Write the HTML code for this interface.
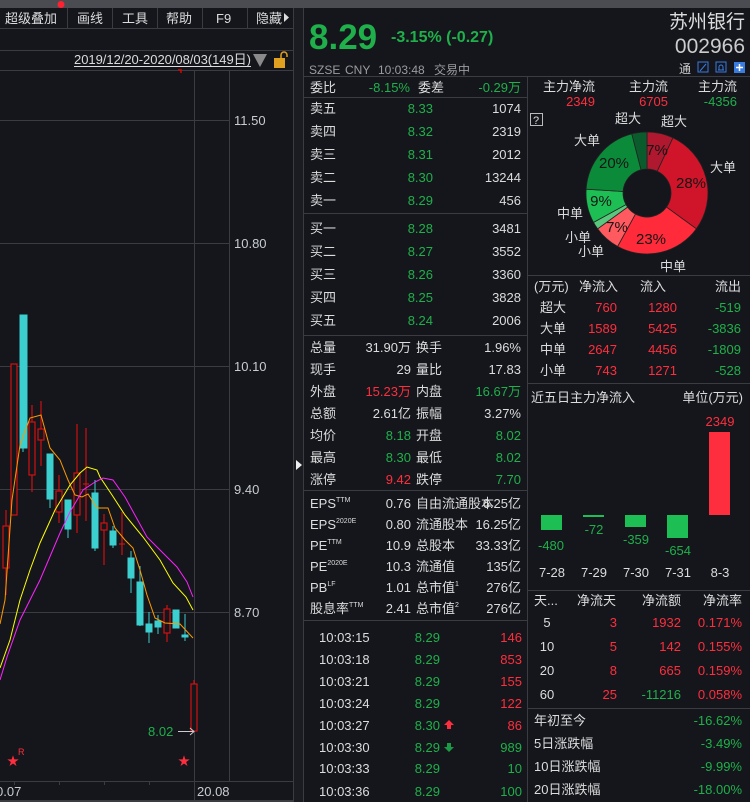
<!DOCTYPE html>
<html><head><meta charset="utf-8"><style>
html,body{margin:0;padding:0;background:#14161b;width:750px;height:802px;overflow:hidden}
svg{display:block}
text{font-family:"Liberation Sans","Noto Sans CJK SC",sans-serif;font-size:13px;fill:#dcdcdc}
.g{fill:#1fb04b}.r{fill:#ff2e3e}.gr{fill:#9a9ca0}.e{text-anchor:end}.m{text-anchor:middle}
.pl{fill:#151515;font-size:15px;text-anchor:middle}
</style></head><body>
<svg width="750" height="802" viewBox="0 0 750 802">
<rect width="750" height="802" fill="#14161b"/>
<rect width="750" height="8" fill="#4a4c52"/>
<g stroke="#3a3c42" stroke-width="1">
<line x1="0" y1="28.5" x2="293" y2="28.5"/><line x1="0" y1="50.5" x2="293" y2="50.5"/><line x1="0" y1="70.5" x2="293" y2="70.5"/>
<line x1="67.5" y1="8" x2="67.5" y2="28"/><line x1="112.5" y1="8" x2="112.5" y2="28"/><line x1="157.5" y1="8" x2="157.5" y2="28"/><line x1="202.5" y1="8" x2="202.5" y2="28"/><line x1="247.5" y1="8" x2="247.5" y2="28"/>
<line x1="293.5" y1="8" x2="293.5" y2="802"/>
<line x1="194.5" y1="70" x2="194.5" y2="802"/><line x1="229.5" y1="70" x2="229.5" y2="781"/>
<line x1="0" y1="120.5" x2="229" y2="120.5"/><line x1="0" y1="243.5" x2="229" y2="243.5"/><line x1="0" y1="366.5" x2="229" y2="366.5"/><line x1="0" y1="489.5" x2="229" y2="489.5"/><line x1="0" y1="612.5" x2="229" y2="612.5"/>
<line x1="0" y1="781.5" x2="293" y2="781.5"/>
<line x1="14.5" y1="781" x2="14.5" y2="785"/><line x1="59.5" y1="781" x2="59.5" y2="785"/><line x1="104.5" y1="781" x2="104.5" y2="785"/><line x1="149.5" y1="781" x2="149.5" y2="785"/>
</g>
<rect x="0" y="800" width="293" height="2" fill="#3a3c42"/>
<text x="5" y="23">超级叠加</text><circle cx="61" cy="4.5" r="3.5" fill="#ff2030"/>
<text x="77" y="23">画线</text><text x="122" y="23">工具</text><text x="166" y="23">帮助</text><text x="216" y="23">F9</text><text x="256" y="23">隐藏</text>
<polygon points="284,13 289,17.5 284,22" fill="#ddd"/>
<text x="74" y="64" style="font-size:13px" textLength="177">2019/12/20-2020/08/03(149日)</text>
<line x1="74" y1="66.5" x2="251" y2="66.5" stroke="#ddd"/>
<polygon points="253,54 267,54 260,67" fill="#8a8a8a"/>
<rect x="274" y="58" width="11" height="10" fill="#e0a020"/><path d="M281 58 v-3 a3 3 0 0 1 6 0 v2" stroke="#e0a020" fill="none" stroke-width="1.5"/>
<path d="M178 70 h3 v3" stroke="#d00" stroke-width="1.5" fill="none"/>
<g><text x="234" y="125" style="fill:#c8ccd2">11.50</text><text x="234" y="248" style="fill:#c8ccd2">10.80</text><text x="234" y="371" style="fill:#c8ccd2">10.10</text><text x="234" y="494" style="fill:#c8ccd2">9.40</text><text x="234" y="617" style="fill:#c8ccd2">8.70</text></g>
<text x="-4" y="796" style="fill:#c8ccd2">0.07</text><text x="197" y="796" style="fill:#c8ccd2">20.08</text>
<g stroke="#d01010" fill="none" stroke-width="1.2">
<line x1="6" y1="510" x2="6" y2="595"/><rect x="3" y="526" width="6" height="42" fill="#14161b"/>
<rect x="11" y="364" width="6" height="151" fill="#14161b"/>
<line x1="32" y1="405" x2="32" y2="492"/><rect x="29" y="422" width="6" height="53" fill="#14161b"/>
<line x1="41" y1="401" x2="41" y2="466"/><rect x="38" y="429" width="6" height="11" fill="#14161b"/>
<line x1="59" y1="475" x2="59" y2="523"/><rect x="56" y="491" width="6" height="21" fill="#14161b"/>
<line x1="77" y1="424" x2="77" y2="533"/><rect x="74" y="473" width="6" height="42" fill="#14161b"/>
<line x1="86" y1="428" x2="86" y2="521"/><line x1="83" y1="484" x2="89" y2="484"/>
<line x1="104" y1="514" x2="104" y2="565"/><rect x="101" y="523" width="6" height="7" fill="#14161b"/>
<line x1="122" y1="512" x2="122" y2="555"/><line x1="119" y1="544" x2="125" y2="544"/>
<line x1="167" y1="605" x2="167" y2="642"/><rect x="164" y="609" width="6" height="24" fill="#14161b"/>
<line x1="194" y1="680" x2="194" y2="684"/><rect x="191" y="684" width="6" height="47" fill="#14161b"/>
</g>
<g fill="#3ccfcf" stroke="#3ccfcf">
<rect x="20" y="315" width="7" height="133"/><line x1="23" y1="448" x2="23" y2="452"/>
<rect x="47" y="454" width="6" height="45"/><line x1="50" y1="499" x2="50" y2="508"/>
<rect x="65" y="500" width="6" height="29"/><line x1="68" y1="529" x2="68" y2="538"/>
<rect x="92" y="493" width="6" height="55"/><line x1="95" y1="480" x2="95" y2="551"/>
<rect x="110" y="531" width="6" height="14"/><line x1="113" y1="526" x2="113" y2="548"/>
<rect x="128" y="558" width="6" height="20"/><line x1="131" y1="551" x2="131" y2="593"/>
<rect x="137" y="582" width="6" height="43"/><line x1="140" y1="566" x2="140" y2="626"/>
<rect x="146" y="624" width="6" height="8"/><line x1="149" y1="612" x2="149" y2="643"/>
<rect x="155" y="621" width="6" height="6"/><line x1="158" y1="615" x2="158" y2="634"/>
<rect x="173" y="610" width="6" height="18"/>
<rect x="182" y="635" width="6" height="2"/><line x1="185" y1="614" x2="185" y2="641"/>
</g>
<g fill="none" stroke-width="1">
<polyline stroke="#ff9900" points="0,624 5,600 12,500 20,445 30,418 41,415 50,448 60,460 68,480 75,495 82,497 88,494 97,508 108,508 115,528 125,540 133,548 140,570 147,595 155,618 165,623 180,624 193,638"/>
<polyline stroke="#ffff00" points="0,668 10,640 20,600 30,570 40,543 55,510 70,485 80,473 87,467 97,470 100,477 112,495 125,515 143,537 160,560 173,583 186,597 193,610"/>
<polyline stroke="#ff22ff" points="0,680 7,657 20,620 40,580 60,533 70,512 83,490 95,482 103,478 113,480 125,497 147,537 160,550 177,567 187,582 193,597"/>
</g>
<text x="148" y="736" class="g">8.02</text><path d="M178 731.5 h16 M190 728 l4 3.5 l-4 3.5" stroke="#ccc" fill="none"/>
<text x="13" y="765" class="r m" style="font-size:12px">★</text><text x="184" y="765" class="r m" style="font-size:12px">★</text>
<text x="18" y="755" class="r" style="font-size:9px">R</text>
<rect x="294" y="8" width="9" height="794" fill="#1a1c21"/>
<polygon points="296,460 302,465 296,470" fill="#eee"/>
<line x1="303.5" y1="8" x2="303.5" y2="802" stroke="#3a3c42"/>
<text x="309" y="49" class="g" style="font-size:35px;font-weight:bold">8.29</text>
<text x="391" y="42" class="g" style="font-size:16px;font-weight:bold">-3.15% (-0.27)</text>
<text x="745" y="28" class="e" style="font-size:19px;fill:#ddd">苏州银行</text>
<text x="745" y="53" class="e" style="font-size:21px;fill:#ccc">002966</text>
<text x="309" y="74" class="gr" style="font-size:12px">SZSE</text><text x="345" y="74" class="gr" style="font-size:12px">CNY</text><text x="378" y="74" class="gr" style="font-size:12px">10:03:48</text><text x="434" y="74" class="gr" style="font-size:12px">交易中</text>
<text x="679" y="73" style="font-size:12px;fill:#ccc">通</text>
<rect x="698" y="62" width="10" height="10" fill="none" stroke="#3a7be0"/><path d="M700 71 l6 -7" stroke="#3a7be0"/>
<rect x="716" y="62" width="10" height="10" fill="none" stroke="#3a7be0"/><path d="M718 70 h6 M719 70 v-3 a2 2 0 0 1 4 0 v3" stroke="#3a7be0" fill="none"/>
<rect x="734" y="62" width="11" height="11" fill="#3a7be0"/><path d="M739.5 64 v7 M736 67.5 h7" stroke="#fff" stroke-width="1.5"/>
<g stroke="#3a3c42"><line x1="303" y1="76.5" x2="750" y2="76.5"/><line x1="527.5" y1="76" x2="527.5" y2="802"/>
<line x1="303" y1="97.5" x2="527" y2="97.5"/><line x1="303" y1="213.5" x2="527" y2="213.5"/><line x1="303" y1="335.5" x2="527" y2="335.5"/><line x1="303" y1="490.5" x2="527" y2="490.5"/><line x1="303" y1="620.5" x2="527" y2="620.5"/>
<line x1="527" y1="275.5" x2="750" y2="275.5"/><line x1="527" y1="383.5" x2="750" y2="383.5"/><line x1="527" y1="590.5" x2="750" y2="590.5"/><line x1="527" y1="708.5" x2="750" y2="708.5"/></g>
<text x="310" y="92">委比</text><text x="410" y="92" class="g e">-8.15%</text><text x="418" y="92">委差</text><text x="521" y="92" class="g e">-0.29万</text>
<g>
<text x="310" y="113">卖五</text><text x="433" y="113" class="g e">8.33</text><text x="521" y="113" class="e">1074</text>
<text x="310" y="136">卖四</text><text x="433" y="136" class="g e">8.32</text><text x="521" y="136" class="e">2319</text>
<text x="310" y="159">卖三</text><text x="433" y="159" class="g e">8.31</text><text x="521" y="159" class="e">2012</text>
<text x="310" y="182">卖二</text><text x="433" y="182" class="g e">8.30</text><text x="521" y="182" class="e">13244</text>
<text x="310" y="205">卖一</text><text x="433" y="205" class="g e">8.29</text><text x="521" y="205" class="e">456</text>
<text x="310" y="233">买一</text><text x="433" y="233" class="g e">8.28</text><text x="521" y="233" class="e">3481</text>
<text x="310" y="256">买二</text><text x="433" y="256" class="g e">8.27</text><text x="521" y="256" class="e">3552</text>
<text x="310" y="279">买三</text><text x="433" y="279" class="g e">8.26</text><text x="521" y="279" class="e">3360</text>
<text x="310" y="302">买四</text><text x="433" y="302" class="g e">8.25</text><text x="521" y="302" class="e">3828</text>
<text x="310" y="325">买五</text><text x="433" y="325" class="g e">8.24</text><text x="521" y="325" class="e">2006</text>
</g>
<g>
<text x="310" y="352">总量</text><text x="411" y="352" class="e">31.90万</text><text x="416" y="352">换手</text><text x="521" y="352" class="e">1.96%</text>
<text x="310" y="374">现手</text><text x="411" y="374" class="e">29</text><text x="416" y="374">量比</text><text x="521" y="374" class="e">17.83</text>
<text x="310" y="396">外盘</text><text x="411" y="396" class="e r">15.23万</text><text x="416" y="396">内盘</text><text x="521" y="396" class="e g">16.67万</text>
<text x="310" y="418">总额</text><text x="411" y="418" class="e">2.61亿</text><text x="416" y="418">振幅</text><text x="521" y="418" class="e">3.27%</text>
<text x="310" y="440">均价</text><text x="411" y="440" class="e g">8.18</text><text x="416" y="440">开盘</text><text x="521" y="440" class="e g">8.02</text>
<text x="310" y="462">最高</text><text x="411" y="462" class="e g">8.30</text><text x="416" y="462">最低</text><text x="521" y="462" class="e g">8.02</text>
<text x="310" y="484">涨停</text><text x="411" y="484" class="e r">9.42</text><text x="416" y="484">跌停</text><text x="521" y="484" class="e g">7.70</text>
</g>
<g>
<text x="310" y="508">EPS<tspan dy="-6" style="font-size:7px">TTM</tspan></text><text x="411" y="508" class="e">0.76</text><text x="416" y="508">自由流通股本</text><text x="521" y="508" class="e">6.25亿</text>
<text x="310" y="529">EPS<tspan dy="-6" style="font-size:7px">2020E</tspan></text><text x="411" y="529" class="e">0.80</text><text x="416" y="529">流通股本</text><text x="521" y="529" class="e">16.25亿</text>
<text x="310" y="550">PE<tspan dy="-6" style="font-size:7px">TTM</tspan></text><text x="411" y="550" class="e">10.9</text><text x="416" y="550">总股本</text><text x="521" y="550" class="e">33.33亿</text>
<text x="310" y="571">PE<tspan dy="-6" style="font-size:7px">2020E</tspan></text><text x="411" y="571" class="e">10.3</text><text x="416" y="571">流通值</text><text x="521" y="571" class="e">135亿</text>
<text x="310" y="592">PB<tspan dy="-6" style="font-size:7px">LF</tspan></text><text x="411" y="592" class="e">1.01</text><text x="416" y="592">总市值<tspan dy="-6" style="font-size:7px">1</tspan></text><text x="521" y="592" class="e">276亿</text>
<text x="310" y="613">股息率<tspan dy="-6" style="font-size:7px">TTM</tspan></text><text x="411" y="613" class="e">2.41</text><text x="416" y="613">总市值<tspan dy="-6" style="font-size:7px">2</tspan></text><text x="521" y="613" class="e">276亿</text>
</g>
<g>
<text x="319" y="642">10:03:15</text><text x="440" y="642" class="e g">8.29</text><text x="522" y="642" class="e r">146</text>
<text x="319" y="664">10:03:18</text><text x="440" y="664" class="e g">8.29</text><text x="522" y="664" class="e r">853</text>
<text x="319" y="686">10:03:21</text><text x="440" y="686" class="e g">8.29</text><text x="522" y="686" class="e r">155</text>
<text x="319" y="708">10:03:24</text><text x="440" y="708" class="e g">8.29</text><text x="522" y="708" class="e r">122</text>
<text x="319" y="730">10:03:27</text><text x="440" y="730" class="e g">8.30</text><text x="522" y="730" class="e r">86</text>
<text x="319" y="752">10:03:30</text><text x="440" y="752" class="e g">8.29</text><text x="522" y="752" class="e g">989</text>
<text x="319" y="773">10:03:33</text><text x="440" y="773" class="e g">8.29</text><text x="522" y="773" class="e g">10</text>
<text x="319" y="796">10:03:36</text><text x="440" y="796" class="e g">8.29</text><text x="522" y="796" class="e g">100</text>
<polygon points="449,720 454,725 451,725 451,729 447,729 447,725 444,725" fill="#ff2e3e"/>
<polygon points="449,752 454,747 451,747 451,743 447,743 447,747 444,747" fill="#1a9a44"/>
</g>
<text x="543" y="91">主力净流</text><text x="629" y="91">主力流</text><text x="698" y="91">主力流</text>
<text x="595" y="106" class="e r">2349</text><text x="668" y="106" class="e r">6705</text><text x="737" y="106" class="e g">-4356</text>
<rect x="530.5" y="113.5" width="12" height="12" fill="none" stroke="#bbb"/><text x="533" y="124" style="font-size:11px">?</text>
<g stroke="#222" stroke-width="0.8">
<path d="M647 132 A61 61 0 0 1 672.97 137.81 L657.22 171.28 A24 24 0 0 0 647 169 Z" fill="#b0182f"/>
<path d="M672.97 137.81 A61 61 0 0 1 696.35 228.86 L666.42 207.11 A24 24 0 0 0 657.22 171.28 Z" fill="#d0142a"/>
<path d="M696.35 228.86 A61 61 0 0 1 617.61 246.45 L635.44 214.03 A24 24 0 0 0 666.42 207.11 Z" fill="#ff2a3a"/>
<path d="M617.61 246.45 A61 61 0 0 1 597.65 228.86 L627.58 207.11 A24 24 0 0 0 635.44 214.03 Z" fill="#ff5a60"/>
<path d="M597.65 228.86 A61 61 0 0 1 593.55 222.39 L625.97 204.56 A24 24 0 0 0 627.58 207.11 Z" fill="#5ac77e"/>
<path d="M593.55 222.39 A61 61 0 0 1 586.12 189.17 L623.05 191.49 A24 24 0 0 0 625.97 204.56 Z" fill="#1dbf55"/>
<path d="M586.12 189.17 A61 61 0 0 1 631.83 133.92 L641.03 169.75 A24 24 0 0 0 623.05 191.49 Z" fill="#0b8a3a"/>
<path d="M631.83 133.92 A61 61 0 0 1 647 132 L647 169 A24 24 0 0 0 641.03 169.75 Z" fill="#0a5c2d"/>
</g>
<text x="657" y="155" class="pl">7%</text><text x="691" y="188" class="pl">28%</text><text x="651" y="244" class="pl">23%</text><text x="617" y="232" class="pl">7%</text><text x="601" y="206" class="pl">9%</text><text x="614" y="168" class="pl">20%</text>
<text x="615" y="123">超大</text><text x="661" y="126">超大</text><text x="574" y="145">大单</text><text x="710" y="172">大单</text>
<text x="557" y="218">中单</text><text x="660" y="271">中单</text><text x="565" y="242">小单</text><text x="578" y="256">小单</text>
<text x="534" y="291">(万元)</text><text x="579" y="291">净流入</text><text x="640" y="291">流入</text><text x="741" y="291" class="e">流出</text>
<text x="540" y="312">超大</text><text x="617" y="312" class="e r">760</text><text x="677" y="312" class="e r">1280</text><text x="741" y="312" class="e g">-519</text>
<text x="540" y="333">大单</text><text x="617" y="333" class="e r">1589</text><text x="677" y="333" class="e r">5425</text><text x="741" y="333" class="e g">-3836</text>
<text x="540" y="354">中单</text><text x="617" y="354" class="e r">2647</text><text x="677" y="354" class="e r">4456</text><text x="741" y="354" class="e g">-1809</text>
<text x="540" y="375">小单</text><text x="617" y="375" class="e r">743</text><text x="677" y="375" class="e r">1271</text><text x="741" y="375" class="e g">-528</text>
<text x="531" y="402">近五日主力净流入</text><text x="743" y="402" class="e">单位(万元)</text>
<text x="720" y="426" class="r m">2349</text>
<rect x="709" y="432" width="21" height="83" fill="#ff2e3e"/>
<rect x="541" y="515" width="21" height="15" fill="#1dbf55"/><rect x="583" y="515" width="21" height="2" fill="#1dbf55"/>
<rect x="625" y="515" width="21" height="12" fill="#1dbf55"/><rect x="667" y="515" width="21" height="23" fill="#1dbf55"/>
<text x="551" y="550" class="g m">-480</text><text x="594" y="534" class="g m">-72</text><text x="636" y="544" class="g m">-359</text><text x="678" y="555" class="g m">-654</text>
<text x="552" y="577" class="m">7-28</text><text x="594" y="577" class="m">7-29</text><text x="636" y="577" class="m">7-30</text><text x="678" y="577" class="m">7-31</text><text x="720" y="577" class="m">8-3</text>
<text x="534" y="605">天...</text><text x="577" y="605">净流天</text><text x="681" y="605" class="e">净流额</text><text x="742" y="605" class="e">净流率</text>
<text x="547" y="627" class="m">5</text><text x="617" y="627" class="e r">3</text><text x="681" y="627" class="e r">1932</text><text x="742" y="627" class="e r">0.171%</text>
<text x="547" y="651" class="m">10</text><text x="617" y="651" class="e r">5</text><text x="681" y="651" class="e r">142</text><text x="742" y="651" class="e r">0.155%</text>
<text x="547" y="675" class="m">20</text><text x="617" y="675" class="e r">8</text><text x="681" y="675" class="e r">665</text><text x="742" y="675" class="e r">0.159%</text>
<text x="547" y="699" class="m">60</text><text x="617" y="699" class="e r">25</text><text x="681" y="699" class="e g">-11216</text><text x="742" y="699" class="e r">0.058%</text>
<text x="534" y="725">年初至今</text><text x="742" y="725" class="e g">-16.62%</text>
<text x="534" y="748">5日涨跌幅</text><text x="742" y="748" class="e g">-3.49%</text>
<text x="534" y="771">10日涨跌幅</text><text x="742" y="771" class="e g">-9.99%</text>
<text x="534" y="794">20日涨跌幅</text><text x="742" y="794" class="e g">-18.00%</text>
</svg>
</body></html>
